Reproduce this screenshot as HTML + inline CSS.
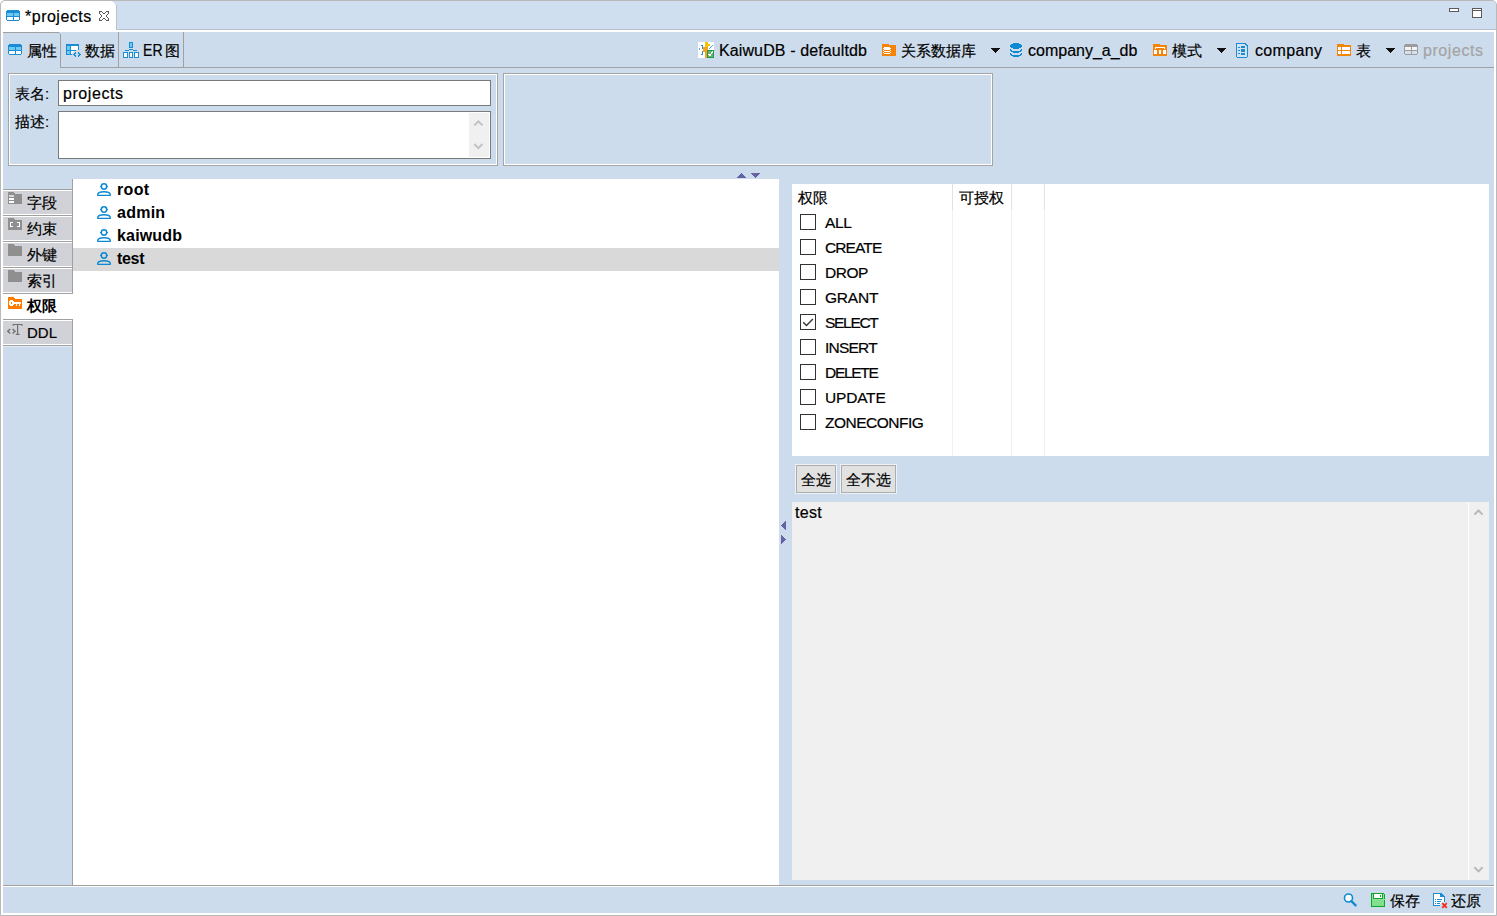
<!DOCTYPE html>
<html><head><meta charset="utf-8"><style>
html,body{margin:0;padding:0;width:1497px;height:916px;overflow:hidden;background:#fff}
body{position:relative;font-family:"Liberation Sans",sans-serif}
body>div{position:absolute}
</style></head><body>
<div style="left:0px;top:0px;width:1497px;height:916px;background:#ffffff;"></div>
<div style="left:0px;top:0px;width:1497px;height:916px;background:#cddcec;box-sizing:border-box;border:1px solid #b9b9b9;border-radius:5px 5px 0 0"></div>
<div style="left:1px;top:1px;width:1495px;height:29px;background:#d0dfef;border-radius:4px 4px 0 0"></div>
<div style="left:1px;top:29px;width:1495px;height:1px;background:#b9c3d0;"></div>
<div style="left:1px;top:30px;width:1495px;height:2px;background:#ffffff;"></div>
<div style="left:1px;top:32px;width:2px;height:883px;background:#ffffff;"></div>
<div style="left:1494px;top:32px;width:2px;height:883px;background:#ffffff;"></div>
<div style="left:1px;top:913px;width:1495px;height:2px;background:#ffffff;"></div>
<div style="left:1px;top:1px;width:115px;height:31px;background:#ffffff;border-radius:5px 6px 0 0"></div>
<div style="left:116px;top:5px;width:1px;height:25px;background:#b9c3d0;"></div>
<svg style="position:absolute;left:1448px;top:7px" width="13" height="7" viewBox="0 0 13 7" shape-rendering="crispEdges"><rect x="1.5" y="1.5" width="9" height="3" fill="#fff" stroke="#5a5a5a" stroke-width="1"/></svg>
<svg style="position:absolute;left:1471px;top:7px" width="13" height="12" viewBox="0 0 13 12" shape-rendering="crispEdges"><rect x="1.5" y="1.5" width="9" height="9" fill="#fff" stroke="#5a5a5a" stroke-width="1"/><line x1="1" y1="3.5" x2="11" y2="3.5" stroke="#5a5a5a"/></svg>
<div style="left:3px;top:32px;width:56px;height:1px;background:#a0a0a0;"></div>
<div style="left:59px;top:33px;width:1px;height:1px;background:#b5b5b5;"></div>
<div style="left:60px;top:34px;width:1px;height:34px;background:#a0a0a0;"></div>
<div style="left:60px;top:67px;width:1434px;height:1px;background:#a0a0a0;"></div>
<div style="left:118px;top:32px;width:1px;height:35px;background:#a0a0a0;"></div>
<div style="left:183px;top:32px;width:1px;height:35px;background:#a0a0a0;"></div>
<div style="left:8px;top:73px;width:490px;height:93px;background:transparent;box-sizing:border-box;border:1px solid #a5a5a5"></div>
<div style="left:9px;top:74px;width:488px;height:91px;background:transparent;box-sizing:border-box;border:1px solid #ffffff"></div>
<div style="left:503px;top:73px;width:490px;height:93px;background:transparent;box-sizing:border-box;border:1px solid #a5a5a5"></div>
<div style="left:504px;top:74px;width:488px;height:91px;background:transparent;box-sizing:border-box;border:1px solid #ffffff"></div>
<div style="left:58px;top:80px;width:433px;height:26px;background:#ffffff;box-sizing:border-box;border:1px solid #7a7a7a"></div>
<div style="left:58px;top:111px;width:433px;height:48px;background:#ffffff;box-sizing:border-box;border:1px solid #7a7a7a"></div>
<div style="left:469px;top:113px;width:20px;height:44px;background:#f0f0f0;"></div>
<svg style="position:absolute;left:469px;top:113px" width="20" height="44" viewBox="0 0 20 44"><polyline points="5.3,12.4 9.4,8.3 13.5,12.4" fill="none" stroke="#c2c2c2" stroke-width="2"/><polyline points="5.3,31 9.4,35.1 13.5,31" fill="none" stroke="#c2c2c2" stroke-width="2"/></svg>
<div style="left:72px;top:179px;width:1px;height:707px;background:#a0a0a0;"></div>
<div style="left:3px;top:189px;width:69px;height:1px;background:#a0a0a0;"></div>
<div style="left:3px;top:190px;width:69px;height:1px;background:#ffffff;"></div>
<div style="left:3px;top:191px;width:69px;height:23px;background:#d1d2d7;"></div>
<div style="left:3px;top:214px;width:69px;height:1px;background:#ffffff;"></div>
<div style="left:3px;top:215px;width:69px;height:1px;background:#a0a0a0;"></div>
<div style="left:3px;top:216px;width:69px;height:1px;background:#ffffff;"></div>
<div style="left:3px;top:217px;width:69px;height:23px;background:#d1d2d7;"></div>
<div style="left:3px;top:240px;width:69px;height:1px;background:#ffffff;"></div>
<div style="left:3px;top:241px;width:69px;height:1px;background:#a0a0a0;"></div>
<div style="left:3px;top:242px;width:69px;height:1px;background:#ffffff;"></div>
<div style="left:3px;top:243px;width:69px;height:23px;background:#d1d2d7;"></div>
<div style="left:3px;top:266px;width:69px;height:1px;background:#ffffff;"></div>
<div style="left:3px;top:267px;width:69px;height:1px;background:#a0a0a0;"></div>
<div style="left:3px;top:268px;width:69px;height:1px;background:#ffffff;"></div>
<div style="left:3px;top:269px;width:69px;height:23px;background:#d1d2d7;"></div>
<div style="left:3px;top:292px;width:69px;height:1px;background:#ffffff;"></div>
<div style="left:3px;top:294px;width:70px;height:25px;background:#ffffff;"></div>
<div style="left:3px;top:319px;width:69px;height:1px;background:#a0a0a0;"></div>
<div style="left:3px;top:320px;width:69px;height:1px;background:#ffffff;"></div>
<div style="left:3px;top:321px;width:69px;height:23px;background:#d1d2d7;"></div>
<div style="left:3px;top:344px;width:69px;height:1px;background:#ffffff;"></div>
<div style="left:3px;top:345px;width:69px;height:1px;background:#a0a0a0;"></div>
<div style="left:3px;top:346px;width:69px;height:1px;background:#e4eaf2;"></div>
<div style="left:3px;top:293px;width:69px;height:1px;background:#a0a0a0;"></div>
<div style="left:73px;top:179px;width:706px;height:706px;background:#ffffff;"></div>
<div style="left:73px;top:248px;width:706px;height:23px;background:#d9d9d9;"></div>
<div style="left:792px;top:184px;width:697px;height:272px;background:#ffffff;"></div>
<div style="left:952px;top:184px;width:1px;height:26px;background:#e2e2e2;"></div>
<div style="left:952px;top:210px;width:1px;height:246px;background:#eaf2fb;"></div>
<div style="left:1011px;top:184px;width:1px;height:26px;background:#e2e2e2;"></div>
<div style="left:1011px;top:210px;width:1px;height:246px;background:#eaf2fb;"></div>
<div style="left:1044px;top:184px;width:1px;height:26px;background:#e2e2e2;"></div>
<div style="left:1044px;top:210px;width:1px;height:246px;background:#eaf2fb;"></div>
<div style="left:800px;top:214px;width:16px;height:16px;background:#ffffff;box-sizing:border-box;border:1px solid #333333"></div>
<div style="left:800px;top:239px;width:16px;height:16px;background:#ffffff;box-sizing:border-box;border:1px solid #333333"></div>
<div style="left:800px;top:264px;width:16px;height:16px;background:#ffffff;box-sizing:border-box;border:1px solid #333333"></div>
<div style="left:800px;top:289px;width:16px;height:16px;background:#ffffff;box-sizing:border-box;border:1px solid #333333"></div>
<div style="left:800px;top:314px;width:16px;height:16px;background:#ffffff;box-sizing:border-box;border:1px solid #333333"></div>
<div style="left:800px;top:339px;width:16px;height:16px;background:#ffffff;box-sizing:border-box;border:1px solid #333333"></div>
<div style="left:800px;top:364px;width:16px;height:16px;background:#ffffff;box-sizing:border-box;border:1px solid #333333"></div>
<div style="left:800px;top:389px;width:16px;height:16px;background:#ffffff;box-sizing:border-box;border:1px solid #333333"></div>
<div style="left:800px;top:414px;width:16px;height:16px;background:#ffffff;box-sizing:border-box;border:1px solid #333333"></div>
<svg style="position:absolute;left:800px;top:314px" width="16" height="16" viewBox="0 0 16 16"><polyline points="3.2,8.2 6.5,11.5 12.9,5" fill="none" stroke="#333" stroke-width="1.35"/></svg>
<div style="left:795px;top:464px;width:42px;height:30px;background:#eef2f7;"></div>
<div style="left:796px;top:465px;width:40px;height:28px;background:#e1e1e1;box-sizing:border-box;border:1px solid #adadad"></div>
<div style="left:840px;top:464px;width:57px;height:30px;background:#eef2f7;"></div>
<div style="left:841px;top:465px;width:55px;height:28px;background:#e1e1e1;box-sizing:border-box;border:1px solid #adadad"></div>
<div style="left:792px;top:502px;width:697px;height:378px;background:#f0f0f0;"></div>
<div style="left:1468px;top:502px;width:1px;height:378px;background:#ffffff;"></div>
<svg style="position:absolute;left:1469px;top:502px" width="20" height="378" viewBox="0 0 20 378"><polyline points="5.4,12.6 9.5,8.5 13.6,12.6" fill="none" stroke="#b8b8b8" stroke-width="2"/><polyline points="5.4,365.3 9.5,369.4 13.6,365.3" fill="none" stroke="#b8b8b8" stroke-width="2"/></svg>
<div style="left:3px;top:885px;width:1491px;height:1px;background:#a0a0a0;"></div>
<div style="left:3px;top:886px;width:1491px;height:1px;background:#ffffff;"></div>
<svg style="position:absolute;left:737px;top:173px" width="9" height="5" viewBox="0 0 9 5" shape-rendering="crispEdges"><rect x="4" y="0" width="1" height="1" fill="#6464a3"/><rect x="3" y="1" width="3" height="1" fill="#6464a3"/><rect x="2" y="2" width="5" height="1" fill="#6464a3"/><rect x="1" y="3" width="7" height="1" fill="#6464a3"/><rect x="0" y="4" width="9" height="1" fill="#6464a3"/></svg>
<svg style="position:absolute;left:751px;top:173px" width="9" height="5" viewBox="0 0 9 5" shape-rendering="crispEdges"><rect x="0" y="0" width="9" height="1" fill="#6464a3"/><rect x="1" y="1" width="7" height="1" fill="#6464a3"/><rect x="2" y="2" width="5" height="1" fill="#6464a3"/><rect x="3" y="3" width="3" height="1" fill="#6464a3"/><rect x="4" y="4" width="1" height="1" fill="#6464a3"/></svg>
<svg style="position:absolute;left:781px;top:521px" width="5" height="9" viewBox="0 0 5 9" shape-rendering="crispEdges"><rect x="4" y="0" width="1" height="1" fill="#6464a3"/><rect x="3" y="1" width="2" height="1" fill="#6464a3"/><rect x="2" y="2" width="3" height="1" fill="#6464a3"/><rect x="1" y="3" width="4" height="1" fill="#6464a3"/><rect x="0" y="4" width="5" height="1" fill="#6464a3"/><rect x="1" y="5" width="4" height="1" fill="#6464a3"/><rect x="2" y="6" width="3" height="1" fill="#6464a3"/><rect x="3" y="7" width="2" height="1" fill="#6464a3"/><rect x="4" y="8" width="1" height="1" fill="#6464a3"/></svg>
<svg style="position:absolute;left:781px;top:535px" width="5" height="9" viewBox="0 0 5 9" shape-rendering="crispEdges"><rect x="0" y="0" width="1" height="1" fill="#6464a3"/><rect x="0" y="1" width="2" height="1" fill="#6464a3"/><rect x="0" y="2" width="3" height="1" fill="#6464a3"/><rect x="0" y="3" width="4" height="1" fill="#6464a3"/><rect x="0" y="4" width="5" height="1" fill="#6464a3"/><rect x="0" y="5" width="4" height="1" fill="#6464a3"/><rect x="0" y="6" width="3" height="1" fill="#6464a3"/><rect x="0" y="7" width="2" height="1" fill="#6464a3"/><rect x="0" y="8" width="1" height="1" fill="#6464a3"/></svg>
<svg style="position:absolute;left:6px;top:10px" width="14" height="11" viewBox="0 0 14 11" shape-rendering="crispEdges"><rect x="1" y="0" width="12" height="1" fill="#1a8dd5"/><rect x="0" y="1" width="14" height="1" fill="#1a8dd5"/><rect x="0" y="2" width="14" height="1" fill="#1a8dd5"/><rect x="0" y="3" width="1" height="1" fill="#1a8dd5"/><rect x="1" y="3" width="6" height="1" fill="#6dc9ee"/><rect x="7" y="3" width="1" height="1" fill="#1a8dd5"/><rect x="8" y="3" width="5" height="1" fill="#6dc9ee"/><rect x="13" y="3" width="1" height="1" fill="#1a8dd5"/><rect x="0" y="4" width="1" height="1" fill="#1a8dd5"/><rect x="1" y="4" width="6" height="1" fill="#6dc9ee"/><rect x="7" y="4" width="1" height="1" fill="#1a8dd5"/><rect x="8" y="4" width="5" height="1" fill="#6dc9ee"/><rect x="13" y="4" width="1" height="1" fill="#1a8dd5"/><rect x="0" y="5" width="1" height="1" fill="#1a8dd5"/><rect x="1" y="5" width="6" height="1" fill="#6dc9ee"/><rect x="7" y="5" width="1" height="1" fill="#1a8dd5"/><rect x="8" y="5" width="5" height="1" fill="#6dc9ee"/><rect x="13" y="5" width="1" height="1" fill="#1a8dd5"/><rect x="0" y="6" width="14" height="1" fill="#1a8dd5"/><rect x="0" y="7" width="1" height="1" fill="#1a8dd5"/><rect x="1" y="7" width="6" height="1" fill="#fff"/><rect x="7" y="7" width="1" height="1" fill="#1a8dd5"/><rect x="8" y="7" width="5" height="1" fill="#fff"/><rect x="13" y="7" width="1" height="1" fill="#1a8dd5"/><rect x="0" y="8" width="1" height="1" fill="#1a8dd5"/><rect x="1" y="8" width="6" height="1" fill="#fff"/><rect x="7" y="8" width="1" height="1" fill="#1a8dd5"/><rect x="8" y="8" width="5" height="1" fill="#fff"/><rect x="13" y="8" width="1" height="1" fill="#1a8dd5"/><rect x="0" y="9" width="1" height="1" fill="#1a8dd5"/><rect x="1" y="9" width="6" height="1" fill="#fff"/><rect x="7" y="9" width="1" height="1" fill="#1a8dd5"/><rect x="8" y="9" width="5" height="1" fill="#fff"/><rect x="13" y="9" width="1" height="1" fill="#1a8dd5"/><rect x="1" y="10" width="12" height="1" fill="#1a8dd5"/></svg>
<svg style="position:absolute;left:8px;top:44px" width="14" height="11" viewBox="0 0 14 11" shape-rendering="crispEdges"><rect x="1" y="0" width="12" height="1" fill="#1a8dd5"/><rect x="0" y="1" width="14" height="1" fill="#1a8dd5"/><rect x="0" y="2" width="14" height="1" fill="#1a8dd5"/><rect x="0" y="3" width="1" height="1" fill="#1a8dd5"/><rect x="1" y="3" width="6" height="1" fill="#6dc9ee"/><rect x="7" y="3" width="1" height="1" fill="#1a8dd5"/><rect x="8" y="3" width="5" height="1" fill="#6dc9ee"/><rect x="13" y="3" width="1" height="1" fill="#1a8dd5"/><rect x="0" y="4" width="1" height="1" fill="#1a8dd5"/><rect x="1" y="4" width="6" height="1" fill="#6dc9ee"/><rect x="7" y="4" width="1" height="1" fill="#1a8dd5"/><rect x="8" y="4" width="5" height="1" fill="#6dc9ee"/><rect x="13" y="4" width="1" height="1" fill="#1a8dd5"/><rect x="0" y="5" width="1" height="1" fill="#1a8dd5"/><rect x="1" y="5" width="6" height="1" fill="#6dc9ee"/><rect x="7" y="5" width="1" height="1" fill="#1a8dd5"/><rect x="8" y="5" width="5" height="1" fill="#6dc9ee"/><rect x="13" y="5" width="1" height="1" fill="#1a8dd5"/><rect x="0" y="6" width="14" height="1" fill="#1a8dd5"/><rect x="0" y="7" width="1" height="1" fill="#1a8dd5"/><rect x="1" y="7" width="6" height="1" fill="#fff"/><rect x="7" y="7" width="1" height="1" fill="#1a8dd5"/><rect x="8" y="7" width="5" height="1" fill="#fff"/><rect x="13" y="7" width="1" height="1" fill="#1a8dd5"/><rect x="0" y="8" width="1" height="1" fill="#1a8dd5"/><rect x="1" y="8" width="6" height="1" fill="#fff"/><rect x="7" y="8" width="1" height="1" fill="#1a8dd5"/><rect x="8" y="8" width="5" height="1" fill="#fff"/><rect x="13" y="8" width="1" height="1" fill="#1a8dd5"/><rect x="0" y="9" width="1" height="1" fill="#1a8dd5"/><rect x="1" y="9" width="6" height="1" fill="#fff"/><rect x="7" y="9" width="1" height="1" fill="#1a8dd5"/><rect x="8" y="9" width="5" height="1" fill="#fff"/><rect x="13" y="9" width="1" height="1" fill="#1a8dd5"/><rect x="1" y="10" width="12" height="1" fill="#1a8dd5"/></svg>
<svg style="position:absolute;left:1404px;top:44px" width="14" height="11" viewBox="0 0 14 11" shape-rendering="crispEdges"><rect x="1" y="0" width="12" height="1" fill="#9c9c9c"/><rect x="0" y="1" width="14" height="1" fill="#9c9c9c"/><rect x="0" y="2" width="14" height="1" fill="#9c9c9c"/><rect x="0" y="3" width="1" height="1" fill="#9c9c9c"/><rect x="1" y="3" width="6" height="1" fill="#f4f4f4"/><rect x="7" y="3" width="1" height="1" fill="#9c9c9c"/><rect x="8" y="3" width="5" height="1" fill="#f4f4f4"/><rect x="13" y="3" width="1" height="1" fill="#9c9c9c"/><rect x="0" y="4" width="1" height="1" fill="#9c9c9c"/><rect x="1" y="4" width="6" height="1" fill="#f4f4f4"/><rect x="7" y="4" width="1" height="1" fill="#9c9c9c"/><rect x="8" y="4" width="5" height="1" fill="#f4f4f4"/><rect x="13" y="4" width="1" height="1" fill="#9c9c9c"/><rect x="0" y="5" width="1" height="1" fill="#9c9c9c"/><rect x="1" y="5" width="6" height="1" fill="#f4f4f4"/><rect x="7" y="5" width="1" height="1" fill="#9c9c9c"/><rect x="8" y="5" width="5" height="1" fill="#f4f4f4"/><rect x="13" y="5" width="1" height="1" fill="#9c9c9c"/><rect x="0" y="6" width="14" height="1" fill="#9c9c9c"/><rect x="0" y="7" width="1" height="1" fill="#9c9c9c"/><rect x="1" y="7" width="6" height="1" fill="#d4e1ef"/><rect x="7" y="7" width="1" height="1" fill="#9c9c9c"/><rect x="8" y="7" width="5" height="1" fill="#d4e1ef"/><rect x="13" y="7" width="1" height="1" fill="#9c9c9c"/><rect x="0" y="8" width="1" height="1" fill="#9c9c9c"/><rect x="1" y="8" width="6" height="1" fill="#d4e1ef"/><rect x="7" y="8" width="1" height="1" fill="#9c9c9c"/><rect x="8" y="8" width="5" height="1" fill="#d4e1ef"/><rect x="13" y="8" width="1" height="1" fill="#9c9c9c"/><rect x="0" y="9" width="1" height="1" fill="#9c9c9c"/><rect x="1" y="9" width="6" height="1" fill="#d4e1ef"/><rect x="7" y="9" width="1" height="1" fill="#9c9c9c"/><rect x="8" y="9" width="5" height="1" fill="#d4e1ef"/><rect x="13" y="9" width="1" height="1" fill="#9c9c9c"/><rect x="1" y="10" width="12" height="1" fill="#9c9c9c"/></svg>
<svg style="position:absolute;left:99px;top:11px" width="10" height="10" viewBox="0 0 10 10" shape-rendering="crispEdges"><rect x="0" y="0" width="3" height="1" fill="#5c5c5c"/><rect x="7" y="0" width="3" height="1" fill="#5c5c5c"/><rect x="0" y="1" width="1" height="1" fill="#5c5c5c"/><rect x="3" y="1" width="1" height="1" fill="#5c5c5c"/><rect x="6" y="1" width="1" height="1" fill="#5c5c5c"/><rect x="9" y="1" width="1" height="1" fill="#5c5c5c"/><rect x="0" y="2" width="1" height="1" fill="#5c5c5c"/><rect x="4" y="2" width="2" height="1" fill="#5c5c5c"/><rect x="9" y="2" width="1" height="1" fill="#5c5c5c"/><rect x="1" y="3" width="1" height="1" fill="#5c5c5c"/><rect x="8" y="3" width="1" height="1" fill="#5c5c5c"/><rect x="2" y="4" width="1" height="1" fill="#5c5c5c"/><rect x="7" y="4" width="1" height="1" fill="#5c5c5c"/><rect x="2" y="5" width="1" height="1" fill="#5c5c5c"/><rect x="7" y="5" width="1" height="1" fill="#5c5c5c"/><rect x="1" y="6" width="1" height="1" fill="#5c5c5c"/><rect x="8" y="6" width="1" height="1" fill="#5c5c5c"/><rect x="0" y="7" width="1" height="1" fill="#5c5c5c"/><rect x="4" y="7" width="2" height="1" fill="#5c5c5c"/><rect x="9" y="7" width="1" height="1" fill="#5c5c5c"/><rect x="0" y="8" width="1" height="1" fill="#5c5c5c"/><rect x="3" y="8" width="1" height="1" fill="#5c5c5c"/><rect x="6" y="8" width="1" height="1" fill="#5c5c5c"/><rect x="9" y="8" width="1" height="1" fill="#5c5c5c"/><rect x="0" y="9" width="3" height="1" fill="#5c5c5c"/><rect x="7" y="9" width="3" height="1" fill="#5c5c5c"/></svg>
<svg style="position:absolute;left:66px;top:44px" width="15" height="13" viewBox="0 0 15 13" shape-rendering="crispEdges"><rect x="0" y="0" width="13" height="1" fill="#1a8dd5"/><rect x="0" y="1" width="13" height="1" fill="#1a8dd5"/><rect x="0" y="2" width="1" height="1" fill="#1a8dd5"/><rect x="1" y="2" width="3" height="1" fill="#6dc9ee"/><rect x="4" y="2" width="1" height="1" fill="#1a8dd5"/><rect x="5" y="2" width="7" height="1" fill="#fff"/><rect x="12" y="2" width="1" height="1" fill="#1a8dd5"/><rect x="0" y="3" width="1" height="1" fill="#1a8dd5"/><rect x="1" y="3" width="3" height="1" fill="#6dc9ee"/><rect x="4" y="3" width="1" height="1" fill="#1a8dd5"/><rect x="5" y="3" width="7" height="1" fill="#fff"/><rect x="12" y="3" width="1" height="1" fill="#1a8dd5"/><rect x="0" y="4" width="1" height="1" fill="#1a8dd5"/><rect x="1" y="4" width="3" height="1" fill="#6dc9ee"/><rect x="4" y="4" width="1" height="1" fill="#1a8dd5"/><rect x="5" y="4" width="7" height="1" fill="#fff"/><rect x="12" y="4" width="1" height="1" fill="#1a8dd5"/><rect x="0" y="5" width="1" height="1" fill="#1a8dd5"/><rect x="1" y="5" width="3" height="1" fill="#6dc9ee"/><rect x="4" y="5" width="1" height="1" fill="#1a8dd5"/><rect x="5" y="5" width="7" height="1" fill="#fff"/><rect x="12" y="5" width="1" height="1" fill="#1a8dd5"/><rect x="0" y="6" width="10" height="1" fill="#1a8dd5"/><rect x="0" y="7" width="1" height="1" fill="#1a8dd5"/><rect x="1" y="7" width="3" height="1" fill="#6dc9ee"/><rect x="4" y="7" width="1" height="1" fill="#1a8dd5"/><rect x="5" y="7" width="3" height="1" fill="#fff"/><rect x="0" y="8" width="1" height="1" fill="#1a8dd5"/><rect x="1" y="8" width="3" height="1" fill="#6dc9ee"/><rect x="4" y="8" width="1" height="1" fill="#1a8dd5"/><rect x="5" y="8" width="2" height="1" fill="#fff"/><rect x="9" y="8" width="1" height="1" fill="#1a8dd5"/><rect x="12" y="8" width="1" height="1" fill="#1a8dd5"/><rect x="0" y="9" width="1" height="1" fill="#1a8dd5"/><rect x="1" y="9" width="3" height="1" fill="#6dc9ee"/><rect x="4" y="9" width="1" height="1" fill="#1a8dd5"/><rect x="5" y="9" width="1" height="1" fill="#fff"/><rect x="8" y="9" width="2" height="1" fill="#1a8dd5"/><rect x="12" y="9" width="2" height="1" fill="#1a8dd5"/><rect x="0" y="10" width="6" height="1" fill="#1a8dd5"/><rect x="7" y="10" width="2" height="1" fill="#1a8dd5"/><rect x="13" y="10" width="2" height="1" fill="#1a8dd5"/><rect x="8" y="11" width="2" height="1" fill="#1a8dd5"/><rect x="12" y="11" width="2" height="1" fill="#1a8dd5"/><rect x="9" y="12" width="1" height="1" fill="#1a8dd5"/><rect x="12" y="12" width="1" height="1" fill="#1a8dd5"/></svg>
<svg style="position:absolute;left:123px;top:42px" width="16" height="16" viewBox="0 0 16 16" shape-rendering="crispEdges"><rect x="6" y="0" width="4" height="1" fill="#1a8dd5"/><rect x="6" y="1" width="1" height="1" fill="#1a8dd5"/><rect x="7" y="1" width="2" height="1" fill="#6dc9ee"/><rect x="9" y="1" width="1" height="1" fill="#1a8dd5"/><rect x="6" y="2" width="1" height="1" fill="#1a8dd5"/><rect x="7" y="2" width="2" height="1" fill="#6dc9ee"/><rect x="9" y="2" width="1" height="1" fill="#1a8dd5"/><rect x="6" y="3" width="1" height="1" fill="#1a8dd5"/><rect x="7" y="3" width="2" height="1" fill="#6dc9ee"/><rect x="9" y="3" width="1" height="1" fill="#1a8dd5"/><rect x="6" y="4" width="1" height="1" fill="#1a8dd5"/><rect x="7" y="4" width="2" height="1" fill="#6dc9ee"/><rect x="9" y="4" width="1" height="1" fill="#1a8dd5"/><rect x="6" y="5" width="4" height="1" fill="#1a8dd5"/><rect x="6" y="7" width="4" height="1" fill="#1a8dd5"/><rect x="2" y="8" width="4" height="1" fill="#1a8dd5"/><rect x="10" y="8" width="4" height="1" fill="#1a8dd5"/><rect x="0" y="10" width="5" height="1" fill="#1a8dd5"/><rect x="6" y="10" width="4" height="1" fill="#1a8dd5"/><rect x="11" y="10" width="5" height="1" fill="#1a8dd5"/><rect x="0" y="11" width="1" height="1" fill="#1a8dd5"/><rect x="1" y="11" width="3" height="1" fill="#fff"/><rect x="4" y="11" width="1" height="1" fill="#1a8dd5"/><rect x="6" y="11" width="1" height="1" fill="#1a8dd5"/><rect x="7" y="11" width="2" height="1" fill="#fff"/><rect x="9" y="11" width="1" height="1" fill="#1a8dd5"/><rect x="11" y="11" width="1" height="1" fill="#1a8dd5"/><rect x="12" y="11" width="3" height="1" fill="#fff"/><rect x="15" y="11" width="1" height="1" fill="#1a8dd5"/><rect x="0" y="12" width="1" height="1" fill="#1a8dd5"/><rect x="1" y="12" width="3" height="1" fill="#fff"/><rect x="4" y="12" width="1" height="1" fill="#1a8dd5"/><rect x="6" y="12" width="1" height="1" fill="#1a8dd5"/><rect x="7" y="12" width="2" height="1" fill="#fff"/><rect x="9" y="12" width="1" height="1" fill="#1a8dd5"/><rect x="11" y="12" width="1" height="1" fill="#1a8dd5"/><rect x="12" y="12" width="3" height="1" fill="#fff"/><rect x="15" y="12" width="1" height="1" fill="#1a8dd5"/><rect x="0" y="13" width="1" height="1" fill="#1a8dd5"/><rect x="1" y="13" width="3" height="1" fill="#fff"/><rect x="4" y="13" width="1" height="1" fill="#1a8dd5"/><rect x="6" y="13" width="1" height="1" fill="#1a8dd5"/><rect x="7" y="13" width="2" height="1" fill="#fff"/><rect x="9" y="13" width="1" height="1" fill="#1a8dd5"/><rect x="11" y="13" width="1" height="1" fill="#1a8dd5"/><rect x="12" y="13" width="3" height="1" fill="#fff"/><rect x="15" y="13" width="1" height="1" fill="#1a8dd5"/><rect x="0" y="14" width="1" height="1" fill="#1a8dd5"/><rect x="1" y="14" width="3" height="1" fill="#fff"/><rect x="4" y="14" width="1" height="1" fill="#1a8dd5"/><rect x="6" y="14" width="1" height="1" fill="#1a8dd5"/><rect x="7" y="14" width="2" height="1" fill="#fff"/><rect x="9" y="14" width="1" height="1" fill="#1a8dd5"/><rect x="11" y="14" width="1" height="1" fill="#1a8dd5"/><rect x="12" y="14" width="3" height="1" fill="#fff"/><rect x="15" y="14" width="1" height="1" fill="#1a8dd5"/><rect x="0" y="15" width="5" height="1" fill="#1a8dd5"/><rect x="6" y="15" width="4" height="1" fill="#1a8dd5"/><rect x="11" y="15" width="5" height="1" fill="#1a8dd5"/></svg>
<svg style="position:absolute;left:698px;top:42px" width="16" height="16" viewBox="0 0 16 16" shape-rendering="crispEdges"><rect x="0" y="0" width="16" height="16" fill="#fff"/><path d="M3,3 H4 V6 H5 V9 H4 V12 H3" stroke="#2b95d6" fill="none" stroke-width="1"/><rect x="1" y="6" width="1" height="2" fill="#56b4e9"/><rect x="7" y="0" width="3" height="16" fill="#f7a21b"/><rect x="7" y="0" width="3" height="5" fill="#f6c700"/><rect x="5" y="5" width="2" height="5" fill="#f7a21b"/><rect x="10" y="2" width="2" height="2" fill="#f6c700"/><path d="M11,7 L15,3" stroke="#44a8e8" stroke-width="1.2"/><rect x="9" y="8" width="7" height="8" fill="#1c9c45"/><rect x="10" y="9" width="5" height="6" fill="#63b27a"/><path d="M10.5,12 L12,13.8 L14.5,9.5" stroke="#fff" stroke-width="1.3" fill="none"/></svg>
<svg style="position:absolute;left:882px;top:44px" width="14" height="12" viewBox="0 0 14 12" shape-rendering="crispEdges"><rect x="0" y="0" width="7" height="1" fill="#f5850a"/><rect x="0" y="1" width="14" height="1" fill="#f5850a"/><rect x="0" y="2" width="14" height="1" fill="#f5850a"/><rect x="0" y="3" width="2" height="1" fill="#f5850a"/><rect x="2" y="3" width="6" height="1" fill="#fff"/><rect x="8" y="3" width="6" height="1" fill="#f5850a"/><rect x="0" y="4" width="1" height="1" fill="#f5850a"/><rect x="1" y="4" width="8" height="1" fill="#fff"/><rect x="9" y="4" width="5" height="1" fill="#f5850a"/><rect x="0" y="5" width="2" height="1" fill="#f5850a"/><rect x="2" y="5" width="6" height="1" fill="#fff"/><rect x="8" y="5" width="6" height="1" fill="#f5850a"/><rect x="0" y="6" width="1" height="1" fill="#f5850a"/><rect x="1" y="6" width="1" height="1" fill="#fff"/><rect x="2" y="6" width="6" height="1" fill="#f5850a"/><rect x="8" y="6" width="1" height="1" fill="#fff"/><rect x="9" y="6" width="5" height="1" fill="#f5850a"/><rect x="0" y="7" width="2" height="1" fill="#f5850a"/><rect x="2" y="7" width="6" height="1" fill="#fff"/><rect x="8" y="7" width="6" height="1" fill="#f5850a"/><rect x="0" y="8" width="1" height="1" fill="#f5850a"/><rect x="1" y="8" width="1" height="1" fill="#fff"/><rect x="2" y="8" width="6" height="1" fill="#f5850a"/><rect x="8" y="8" width="1" height="1" fill="#fff"/><rect x="9" y="8" width="5" height="1" fill="#f5850a"/><rect x="0" y="9" width="2" height="1" fill="#f5850a"/><rect x="2" y="9" width="6" height="1" fill="#fff"/><rect x="8" y="9" width="6" height="1" fill="#f5850a"/><rect x="0" y="10" width="14" height="1" fill="#f5850a"/><rect x="0" y="11" width="14" height="1" fill="#f5850a"/></svg>
<svg style="position:absolute;left:991px;top:48px" width="9" height="5" viewBox="0 0 9 5" shape-rendering="crispEdges"><rect x="0" y="0" width="9" height="1" fill="#111"/><rect x="1" y="1" width="7" height="1" fill="#111"/><rect x="2" y="2" width="5" height="1" fill="#111"/><rect x="3" y="3" width="3" height="1" fill="#111"/><rect x="4" y="4" width="1" height="1" fill="#111"/></svg>
<svg style="position:absolute;left:1217px;top:48px" width="9" height="5" viewBox="0 0 9 5" shape-rendering="crispEdges"><rect x="0" y="0" width="9" height="1" fill="#111"/><rect x="1" y="1" width="7" height="1" fill="#111"/><rect x="2" y="2" width="5" height="1" fill="#111"/><rect x="3" y="3" width="3" height="1" fill="#111"/><rect x="4" y="4" width="1" height="1" fill="#111"/></svg>
<svg style="position:absolute;left:1386px;top:48px" width="9" height="5" viewBox="0 0 9 5" shape-rendering="crispEdges"><rect x="0" y="0" width="9" height="1" fill="#111"/><rect x="1" y="1" width="7" height="1" fill="#111"/><rect x="2" y="2" width="5" height="1" fill="#111"/><rect x="3" y="3" width="3" height="1" fill="#111"/><rect x="4" y="4" width="1" height="1" fill="#111"/></svg>
<svg style="position:absolute;left:1010px;top:43px" width="12" height="14" viewBox="0 0 12 14" shape-rendering="crispEdges"><rect x="3" y="0" width="6" height="1" fill="#0f8bd6"/><rect x="1" y="1" width="10" height="1" fill="#0f8bd6"/><rect x="0" y="2" width="12" height="1" fill="#0f8bd6"/><rect x="0" y="3" width="12" height="1" fill="#0f8bd6"/><rect x="1" y="4" width="10" height="1" fill="#0f8bd6"/><rect x="3" y="5" width="6" height="1" fill="#0f8bd6"/><rect x="0" y="6" width="1" height="1" fill="#0f8bd6"/><rect x="11" y="6" width="1" height="1" fill="#0f8bd6"/><rect x="0" y="7" width="2" height="1" fill="#0f8bd6"/><rect x="10" y="7" width="2" height="1" fill="#0f8bd6"/><rect x="1" y="8" width="10" height="1" fill="#0f8bd6"/><rect x="3" y="9" width="6" height="1" fill="#0f8bd6"/><rect x="0" y="10" width="1" height="1" fill="#0f8bd6"/><rect x="11" y="10" width="1" height="1" fill="#0f8bd6"/><rect x="0" y="11" width="2" height="1" fill="#0f8bd6"/><rect x="10" y="11" width="2" height="1" fill="#0f8bd6"/><rect x="1" y="12" width="10" height="1" fill="#0f8bd6"/><rect x="3" y="13" width="6" height="1" fill="#0f8bd6"/></svg>
<svg style="position:absolute;left:1153px;top:44px" width="14" height="12" viewBox="0 0 14 12" shape-rendering="crispEdges"><rect x="0" y="0" width="7" height="1" fill="#f5850a"/><rect x="0" y="1" width="14" height="1" fill="#f5850a"/><rect x="0" y="2" width="14" height="1" fill="#f5850a"/><rect x="0" y="3" width="2" height="1" fill="#f5850a"/><rect x="2" y="3" width="10" height="1" fill="#fff"/><rect x="12" y="3" width="2" height="1" fill="#f5850a"/><rect x="0" y="4" width="2" height="1" fill="#f5850a"/><rect x="2" y="4" width="1" height="1" fill="#fff"/><rect x="3" y="4" width="8" height="1" fill="#f5850a"/><rect x="11" y="4" width="1" height="1" fill="#fff"/><rect x="12" y="4" width="2" height="1" fill="#f5850a"/><rect x="0" y="5" width="14" height="1" fill="#f5850a"/><rect x="0" y="6" width="1" height="1" fill="#f5850a"/><rect x="1" y="6" width="3" height="1" fill="#fff"/><rect x="4" y="6" width="2" height="1" fill="#f5850a"/><rect x="6" y="6" width="2" height="1" fill="#fff"/><rect x="8" y="6" width="2" height="1" fill="#f5850a"/><rect x="10" y="6" width="3" height="1" fill="#fff"/><rect x="13" y="6" width="1" height="1" fill="#f5850a"/><rect x="0" y="7" width="1" height="1" fill="#f5850a"/><rect x="1" y="7" width="3" height="1" fill="#fff"/><rect x="4" y="7" width="2" height="1" fill="#f5850a"/><rect x="6" y="7" width="2" height="1" fill="#fff"/><rect x="8" y="7" width="2" height="1" fill="#f5850a"/><rect x="10" y="7" width="3" height="1" fill="#fff"/><rect x="13" y="7" width="1" height="1" fill="#f5850a"/><rect x="0" y="8" width="1" height="1" fill="#f5850a"/><rect x="1" y="8" width="3" height="1" fill="#fff"/><rect x="4" y="8" width="2" height="1" fill="#f5850a"/><rect x="6" y="8" width="2" height="1" fill="#fff"/><rect x="8" y="8" width="2" height="1" fill="#f5850a"/><rect x="10" y="8" width="3" height="1" fill="#fff"/><rect x="13" y="8" width="1" height="1" fill="#f5850a"/><rect x="0" y="9" width="1" height="1" fill="#f5850a"/><rect x="1" y="9" width="3" height="1" fill="#fff"/><rect x="4" y="9" width="2" height="1" fill="#f5850a"/><rect x="6" y="9" width="2" height="1" fill="#fff"/><rect x="8" y="9" width="2" height="1" fill="#f5850a"/><rect x="10" y="9" width="3" height="1" fill="#fff"/><rect x="13" y="9" width="1" height="1" fill="#f5850a"/><rect x="0" y="10" width="14" height="1" fill="#f5850a"/><rect x="0" y="11" width="14" height="1" fill="#f5850a"/></svg>
<svg style="position:absolute;left:1236px;top:43px" width="12" height="15" viewBox="0 0 12 15" shape-rendering="crispEdges"><rect x="0" y="0" width="10" height="1" fill="#1a8dd5"/><rect x="0" y="1" width="1" height="1" fill="#1a8dd5"/><rect x="1" y="1" width="8" height="1" fill="#d6e2ef"/><rect x="9" y="1" width="2" height="1" fill="#1a8dd5"/><rect x="0" y="2" width="1" height="1" fill="#1a8dd5"/><rect x="1" y="2" width="9" height="1" fill="#d6e2ef"/><rect x="10" y="2" width="2" height="1" fill="#1a8dd5"/><rect x="0" y="3" width="1" height="1" fill="#1a8dd5"/><rect x="1" y="3" width="4" height="1" fill="#d6e2ef"/><rect x="5" y="3" width="4" height="1" fill="#1a8dd5"/><rect x="9" y="3" width="2" height="1" fill="#d6e2ef"/><rect x="11" y="3" width="1" height="1" fill="#1a8dd5"/><rect x="0" y="4" width="1" height="1" fill="#1a8dd5"/><rect x="1" y="4" width="1" height="1" fill="#d6e2ef"/><rect x="2" y="4" width="2" height="1" fill="#1a8dd5"/><rect x="4" y="4" width="1" height="1" fill="#d6e2ef"/><rect x="5" y="4" width="4" height="1" fill="#1a8dd5"/><rect x="9" y="4" width="2" height="1" fill="#d6e2ef"/><rect x="11" y="4" width="1" height="1" fill="#1a8dd5"/><rect x="0" y="5" width="1" height="1" fill="#1a8dd5"/><rect x="1" y="5" width="10" height="1" fill="#d6e2ef"/><rect x="11" y="5" width="1" height="1" fill="#1a8dd5"/><rect x="0" y="6" width="1" height="1" fill="#1a8dd5"/><rect x="1" y="6" width="4" height="1" fill="#d6e2ef"/><rect x="5" y="6" width="4" height="1" fill="#1a8dd5"/><rect x="9" y="6" width="2" height="1" fill="#d6e2ef"/><rect x="11" y="6" width="1" height="1" fill="#1a8dd5"/><rect x="0" y="7" width="1" height="1" fill="#1a8dd5"/><rect x="1" y="7" width="1" height="1" fill="#d6e2ef"/><rect x="2" y="7" width="2" height="1" fill="#1a8dd5"/><rect x="4" y="7" width="1" height="1" fill="#d6e2ef"/><rect x="5" y="7" width="4" height="1" fill="#1a8dd5"/><rect x="9" y="7" width="2" height="1" fill="#d6e2ef"/><rect x="11" y="7" width="1" height="1" fill="#1a8dd5"/><rect x="0" y="8" width="1" height="1" fill="#1a8dd5"/><rect x="1" y="8" width="4" height="1" fill="#d6e2ef"/><rect x="5" y="8" width="4" height="1" fill="#1a8dd5"/><rect x="9" y="8" width="2" height="1" fill="#d6e2ef"/><rect x="11" y="8" width="1" height="1" fill="#1a8dd5"/><rect x="0" y="9" width="1" height="1" fill="#1a8dd5"/><rect x="1" y="9" width="10" height="1" fill="#d6e2ef"/><rect x="11" y="9" width="1" height="1" fill="#1a8dd5"/><rect x="0" y="10" width="1" height="1" fill="#1a8dd5"/><rect x="1" y="10" width="1" height="1" fill="#d6e2ef"/><rect x="2" y="10" width="2" height="1" fill="#1a8dd5"/><rect x="4" y="10" width="1" height="1" fill="#d6e2ef"/><rect x="5" y="10" width="4" height="1" fill="#1a8dd5"/><rect x="9" y="10" width="2" height="1" fill="#d6e2ef"/><rect x="11" y="10" width="1" height="1" fill="#1a8dd5"/><rect x="0" y="11" width="1" height="1" fill="#1a8dd5"/><rect x="1" y="11" width="4" height="1" fill="#d6e2ef"/><rect x="5" y="11" width="4" height="1" fill="#1a8dd5"/><rect x="9" y="11" width="2" height="1" fill="#d6e2ef"/><rect x="11" y="11" width="1" height="1" fill="#1a8dd5"/><rect x="0" y="12" width="1" height="1" fill="#1a8dd5"/><rect x="1" y="12" width="10" height="1" fill="#d6e2ef"/><rect x="11" y="12" width="1" height="1" fill="#1a8dd5"/><rect x="0" y="13" width="1" height="1" fill="#1a8dd5"/><rect x="1" y="13" width="10" height="1" fill="#d6e2ef"/><rect x="11" y="13" width="1" height="1" fill="#1a8dd5"/><rect x="1" y="14" width="10" height="1" fill="#1a8dd5"/></svg>
<svg style="position:absolute;left:1337px;top:44px" width="14" height="12" viewBox="0 0 14 12" shape-rendering="crispEdges"><rect x="0" y="0" width="7" height="1" fill="#f5850a"/><rect x="0" y="1" width="14" height="1" fill="#f5850a"/><rect x="0" y="2" width="14" height="1" fill="#f5850a"/><rect x="0" y="3" width="1" height="1" fill="#f5850a"/><rect x="1" y="3" width="3" height="1" fill="#fff"/><rect x="4" y="3" width="1" height="1" fill="#f5850a"/><rect x="5" y="3" width="8" height="1" fill="#fff"/><rect x="13" y="3" width="1" height="1" fill="#f5850a"/><rect x="0" y="4" width="1" height="1" fill="#f5850a"/><rect x="1" y="4" width="3" height="1" fill="#fff"/><rect x="4" y="4" width="1" height="1" fill="#f5850a"/><rect x="5" y="4" width="8" height="1" fill="#fff"/><rect x="13" y="4" width="1" height="1" fill="#f5850a"/><rect x="0" y="5" width="1" height="1" fill="#f5850a"/><rect x="1" y="5" width="3" height="1" fill="#fff"/><rect x="4" y="5" width="1" height="1" fill="#f5850a"/><rect x="5" y="5" width="8" height="1" fill="#fff"/><rect x="13" y="5" width="1" height="1" fill="#f5850a"/><rect x="0" y="6" width="14" height="1" fill="#f5850a"/><rect x="0" y="7" width="1" height="1" fill="#f5850a"/><rect x="1" y="7" width="3" height="1" fill="#fff"/><rect x="4" y="7" width="1" height="1" fill="#f5850a"/><rect x="5" y="7" width="8" height="1" fill="#fff"/><rect x="13" y="7" width="1" height="1" fill="#f5850a"/><rect x="0" y="8" width="1" height="1" fill="#f5850a"/><rect x="1" y="8" width="3" height="1" fill="#fff"/><rect x="4" y="8" width="1" height="1" fill="#f5850a"/><rect x="5" y="8" width="8" height="1" fill="#fff"/><rect x="13" y="8" width="1" height="1" fill="#f5850a"/><rect x="0" y="9" width="1" height="1" fill="#f5850a"/><rect x="1" y="9" width="3" height="1" fill="#fff"/><rect x="4" y="9" width="1" height="1" fill="#f5850a"/><rect x="5" y="9" width="8" height="1" fill="#fff"/><rect x="13" y="9" width="1" height="1" fill="#f5850a"/><rect x="0" y="10" width="14" height="1" fill="#f5850a"/><rect x="0" y="11" width="14" height="1" fill="#f5850a"/></svg>
<svg style="position:absolute;left:8px;top:192px" width="14" height="12" viewBox="0 0 14 12" shape-rendering="crispEdges"><rect x="0" y="0" width="6" height="1" fill="#8f8f8f"/><rect x="0" y="1" width="7" height="1" fill="#8f8f8f"/><rect x="0" y="2" width="14" height="1" fill="#8f8f8f"/><rect x="0" y="3" width="1" height="1" fill="#8f8f8f"/><rect x="1" y="3" width="5" height="1" fill="#d8d8d8"/><rect x="6" y="3" width="8" height="1" fill="#8f8f8f"/><rect x="0" y="4" width="1" height="1" fill="#8f8f8f"/><rect x="1" y="4" width="5" height="1" fill="#d8d8d8"/><rect x="6" y="4" width="8" height="1" fill="#8f8f8f"/><rect x="0" y="5" width="14" height="1" fill="#8f8f8f"/><rect x="0" y="6" width="1" height="1" fill="#8f8f8f"/><rect x="1" y="6" width="5" height="1" fill="#fff"/><rect x="6" y="6" width="8" height="1" fill="#8f8f8f"/><rect x="0" y="7" width="1" height="1" fill="#8f8f8f"/><rect x="1" y="7" width="5" height="1" fill="#fff"/><rect x="6" y="7" width="8" height="1" fill="#8f8f8f"/><rect x="0" y="8" width="14" height="1" fill="#8f8f8f"/><rect x="0" y="9" width="1" height="1" fill="#8f8f8f"/><rect x="1" y="9" width="5" height="1" fill="#fff"/><rect x="6" y="9" width="8" height="1" fill="#8f8f8f"/><rect x="0" y="10" width="1" height="1" fill="#8f8f8f"/><rect x="1" y="10" width="5" height="1" fill="#fff"/><rect x="6" y="10" width="8" height="1" fill="#8f8f8f"/><rect x="0" y="11" width="14" height="1" fill="#8f8f8f"/></svg>
<svg style="position:absolute;left:8px;top:218px" width="14" height="12" viewBox="0 0 14 12" shape-rendering="crispEdges"><rect x="0" y="0" width="6" height="1" fill="#8f8f8f"/><rect x="0" y="1" width="7" height="1" fill="#8f8f8f"/><rect x="0" y="2" width="14" height="1" fill="#8f8f8f"/><rect x="0" y="3" width="14" height="1" fill="#8f8f8f"/><rect x="0" y="4" width="2" height="1" fill="#8f8f8f"/><rect x="2" y="4" width="3" height="1" fill="#fff"/><rect x="5" y="4" width="4" height="1" fill="#8f8f8f"/><rect x="9" y="4" width="3" height="1" fill="#fff"/><rect x="12" y="4" width="2" height="1" fill="#8f8f8f"/><rect x="0" y="5" width="2" height="1" fill="#8f8f8f"/><rect x="2" y="5" width="1" height="1" fill="#fff"/><rect x="3" y="5" width="8" height="1" fill="#8f8f8f"/><rect x="11" y="5" width="1" height="1" fill="#fff"/><rect x="12" y="5" width="2" height="1" fill="#8f8f8f"/><rect x="0" y="6" width="2" height="1" fill="#8f8f8f"/><rect x="2" y="6" width="1" height="1" fill="#fff"/><rect x="3" y="6" width="8" height="1" fill="#8f8f8f"/><rect x="11" y="6" width="1" height="1" fill="#fff"/><rect x="12" y="6" width="2" height="1" fill="#8f8f8f"/><rect x="0" y="7" width="2" height="1" fill="#8f8f8f"/><rect x="2" y="7" width="1" height="1" fill="#fff"/><rect x="3" y="7" width="8" height="1" fill="#8f8f8f"/><rect x="11" y="7" width="1" height="1" fill="#fff"/><rect x="12" y="7" width="2" height="1" fill="#8f8f8f"/><rect x="0" y="8" width="2" height="1" fill="#8f8f8f"/><rect x="2" y="8" width="3" height="1" fill="#fff"/><rect x="5" y="8" width="4" height="1" fill="#8f8f8f"/><rect x="9" y="8" width="3" height="1" fill="#fff"/><rect x="12" y="8" width="2" height="1" fill="#8f8f8f"/><rect x="0" y="9" width="14" height="1" fill="#8f8f8f"/><rect x="0" y="10" width="14" height="1" fill="#8f8f8f"/><rect x="0" y="11" width="14" height="1" fill="#8f8f8f"/></svg>
<svg style="position:absolute;left:8px;top:244px" width="14" height="12" viewBox="0 0 14 12" shape-rendering="crispEdges"><rect x="0" y="0" width="6" height="1" fill="#8f8f8f"/><rect x="0" y="1" width="7" height="1" fill="#8f8f8f"/><rect x="0" y="2" width="14" height="1" fill="#8f8f8f"/><rect x="0" y="3" width="14" height="1" fill="#8f8f8f"/><rect x="0" y="4" width="14" height="1" fill="#8f8f8f"/><rect x="0" y="5" width="14" height="1" fill="#8f8f8f"/><rect x="0" y="6" width="14" height="1" fill="#8f8f8f"/><rect x="0" y="7" width="14" height="1" fill="#8f8f8f"/><rect x="0" y="8" width="14" height="1" fill="#8f8f8f"/><rect x="0" y="9" width="14" height="1" fill="#8f8f8f"/><rect x="0" y="10" width="14" height="1" fill="#8f8f8f"/><rect x="0" y="11" width="14" height="1" fill="#8f8f8f"/></svg>
<svg style="position:absolute;left:8px;top:270px" width="14" height="12" viewBox="0 0 14 12" shape-rendering="crispEdges"><rect x="0" y="0" width="6" height="1" fill="#8f8f8f"/><rect x="0" y="1" width="7" height="1" fill="#8f8f8f"/><rect x="0" y="2" width="14" height="1" fill="#8f8f8f"/><rect x="0" y="3" width="14" height="1" fill="#8f8f8f"/><rect x="0" y="4" width="14" height="1" fill="#8f8f8f"/><rect x="0" y="5" width="14" height="1" fill="#8f8f8f"/><rect x="0" y="6" width="14" height="1" fill="#8f8f8f"/><rect x="0" y="7" width="14" height="1" fill="#8f8f8f"/><rect x="0" y="8" width="14" height="1" fill="#8f8f8f"/><rect x="0" y="9" width="14" height="1" fill="#8f8f8f"/><rect x="0" y="10" width="14" height="1" fill="#8f8f8f"/><rect x="0" y="11" width="14" height="1" fill="#8f8f8f"/></svg>
<svg style="position:absolute;left:8px;top:297px" width="14" height="12" viewBox="0 0 14 12" shape-rendering="crispEdges"><rect x="0" y="0" width="6" height="1" fill="#ff7c00"/><rect x="0" y="1" width="7" height="1" fill="#ff7c00"/><rect x="0" y="2" width="14" height="1" fill="#ff7c00"/><rect x="0" y="3" width="2" height="1" fill="#ff7c00"/><rect x="2" y="3" width="3" height="1" fill="#fff"/><rect x="5" y="3" width="9" height="1" fill="#ff7c00"/><rect x="0" y="4" width="1" height="1" fill="#ff7c00"/><rect x="1" y="4" width="5" height="1" fill="#fff"/><rect x="6" y="4" width="8" height="1" fill="#ff7c00"/><rect x="0" y="5" width="1" height="1" fill="#ff7c00"/><rect x="1" y="5" width="2" height="1" fill="#fff"/><rect x="3" y="5" width="1" height="1" fill="#ff7c00"/><rect x="4" y="5" width="9" height="1" fill="#fff"/><rect x="13" y="5" width="1" height="1" fill="#ff7c00"/><rect x="0" y="6" width="1" height="1" fill="#ff7c00"/><rect x="1" y="6" width="2" height="1" fill="#fff"/><rect x="3" y="6" width="1" height="1" fill="#ff7c00"/><rect x="4" y="6" width="9" height="1" fill="#fff"/><rect x="13" y="6" width="1" height="1" fill="#ff7c00"/><rect x="0" y="7" width="1" height="1" fill="#ff7c00"/><rect x="1" y="7" width="5" height="1" fill="#fff"/><rect x="6" y="7" width="2" height="1" fill="#ff7c00"/><rect x="8" y="7" width="1" height="1" fill="#fff"/><rect x="9" y="7" width="2" height="1" fill="#ff7c00"/><rect x="11" y="7" width="1" height="1" fill="#fff"/><rect x="12" y="7" width="2" height="1" fill="#ff7c00"/><rect x="0" y="8" width="2" height="1" fill="#ff7c00"/><rect x="2" y="8" width="3" height="1" fill="#fff"/><rect x="5" y="8" width="3" height="1" fill="#ff7c00"/><rect x="8" y="8" width="1" height="1" fill="#fff"/><rect x="9" y="8" width="2" height="1" fill="#ff7c00"/><rect x="11" y="8" width="1" height="1" fill="#fff"/><rect x="12" y="8" width="2" height="1" fill="#ff7c00"/><rect x="0" y="9" width="14" height="1" fill="#ff7c00"/><rect x="0" y="10" width="14" height="1" fill="#ff7c00"/><rect x="0" y="11" width="14" height="1" fill="#ff7c00"/></svg>
<svg style="position:absolute;left:6px;top:323px" width="17" height="13" viewBox="0 0 17 13"><path d="M4.2,6 L1.8,8.2 L4.2,10.4 M6.6,6 L9,8.2 L6.6,10.4" stroke="#707070" fill="none" stroke-width="1.4"/><path d="M7.2,1.5 H16 M11.6,1.5 V11.3 M9.8,11.3 H13.6" stroke="#707070" fill="none" stroke-width="1.2"/><path d="M7.2,1 V3 M16,1 V3" stroke="#707070" stroke-width="1"/></svg>
<svg style="position:absolute;left:95px;top:183px" width="17" height="14" viewBox="0 0 17 14"><circle cx="9" cy="3.5" r="2.7" fill="none" stroke="#0b89d3" stroke-width="1.5"/><rect x="5" y="3" width="1.3" height="1" fill="#0b89d3"/><rect x="11.7" y="3" width="1.3" height="1" fill="#0b89d3"/><path d="M2.7,12.3 V11.3 Q3.2,8.7 9,8.7 Q14.8,8.7 15.3,11.3 V12.3 Z" fill="none" stroke="#0b89d3" stroke-width="1.35" stroke-linejoin="round"/></svg>
<svg style="position:absolute;left:95px;top:206px" width="17" height="14" viewBox="0 0 17 14"><circle cx="9" cy="3.5" r="2.7" fill="none" stroke="#0b89d3" stroke-width="1.5"/><rect x="5" y="3" width="1.3" height="1" fill="#0b89d3"/><rect x="11.7" y="3" width="1.3" height="1" fill="#0b89d3"/><path d="M2.7,12.3 V11.3 Q3.2,8.7 9,8.7 Q14.8,8.7 15.3,11.3 V12.3 Z" fill="none" stroke="#0b89d3" stroke-width="1.35" stroke-linejoin="round"/></svg>
<svg style="position:absolute;left:95px;top:229px" width="17" height="14" viewBox="0 0 17 14"><circle cx="9" cy="3.5" r="2.7" fill="none" stroke="#0b89d3" stroke-width="1.5"/><rect x="5" y="3" width="1.3" height="1" fill="#0b89d3"/><rect x="11.7" y="3" width="1.3" height="1" fill="#0b89d3"/><path d="M2.7,12.3 V11.3 Q3.2,8.7 9,8.7 Q14.8,8.7 15.3,11.3 V12.3 Z" fill="none" stroke="#0b89d3" stroke-width="1.35" stroke-linejoin="round"/></svg>
<svg style="position:absolute;left:95px;top:252px" width="17" height="14" viewBox="0 0 17 14"><circle cx="9" cy="3.5" r="2.7" fill="none" stroke="#0b89d3" stroke-width="1.5"/><rect x="5" y="3" width="1.3" height="1" fill="#0b89d3"/><rect x="11.7" y="3" width="1.3" height="1" fill="#0b89d3"/><path d="M2.7,12.3 V11.3 Q3.2,8.7 9,8.7 Q14.8,8.7 15.3,11.3 V12.3 Z" fill="none" stroke="#0b89d3" stroke-width="1.35" stroke-linejoin="round"/></svg>
<svg style="position:absolute;left:1343px;top:893px" width="15" height="15" viewBox="0 0 15 15"><circle cx="5.5" cy="5" r="4" fill="#fff" stroke="#0c8ad5" stroke-width="1.6"/><path d="M8.3,8 L12.6,12.3" stroke="#0c8ad5" stroke-width="2.4" stroke-linecap="round"/></svg>
<svg style="position:absolute;left:1371px;top:893px" width="14" height="14" viewBox="0 0 14 14" shape-rendering="crispEdges"><rect x="0" y="0" width="13" height="1" fill="#0ea52b"/><rect x="0" y="1" width="1" height="1" fill="#0ea52b"/><rect x="1" y="1" width="1" height="1" fill="#8fe39c"/><rect x="2" y="1" width="1" height="1" fill="#0ea52b"/><rect x="3" y="1" width="8" height="1" fill="#fff"/><rect x="11" y="1" width="1" height="1" fill="#0ea52b"/><rect x="12" y="1" width="1" height="1" fill="#8fe39c"/><rect x="13" y="1" width="1" height="1" fill="#0ea52b"/><rect x="0" y="2" width="1" height="1" fill="#0ea52b"/><rect x="1" y="2" width="1" height="1" fill="#8fe39c"/><rect x="2" y="2" width="1" height="1" fill="#0ea52b"/><rect x="3" y="2" width="6" height="1" fill="#fff"/><rect x="9" y="2" width="1" height="1" fill="#0ea52b"/><rect x="10" y="2" width="1" height="1" fill="#fff"/><rect x="11" y="2" width="1" height="1" fill="#0ea52b"/><rect x="12" y="2" width="1" height="1" fill="#8fe39c"/><rect x="13" y="2" width="1" height="1" fill="#0ea52b"/><rect x="0" y="3" width="1" height="1" fill="#0ea52b"/><rect x="1" y="3" width="1" height="1" fill="#8fe39c"/><rect x="2" y="3" width="1" height="1" fill="#0ea52b"/><rect x="3" y="3" width="6" height="1" fill="#fff"/><rect x="9" y="3" width="1" height="1" fill="#0ea52b"/><rect x="10" y="3" width="1" height="1" fill="#fff"/><rect x="11" y="3" width="1" height="1" fill="#0ea52b"/><rect x="12" y="3" width="1" height="1" fill="#8fe39c"/><rect x="13" y="3" width="1" height="1" fill="#0ea52b"/><rect x="0" y="4" width="1" height="1" fill="#0ea52b"/><rect x="1" y="4" width="1" height="1" fill="#8fe39c"/><rect x="2" y="4" width="1" height="1" fill="#0ea52b"/><rect x="3" y="4" width="8" height="1" fill="#fff"/><rect x="11" y="4" width="1" height="1" fill="#0ea52b"/><rect x="12" y="4" width="1" height="1" fill="#8fe39c"/><rect x="13" y="4" width="1" height="1" fill="#0ea52b"/><rect x="0" y="5" width="1" height="1" fill="#0ea52b"/><rect x="1" y="5" width="1" height="1" fill="#8fe39c"/><rect x="2" y="5" width="10" height="1" fill="#0ea52b"/><rect x="12" y="5" width="1" height="1" fill="#8fe39c"/><rect x="13" y="5" width="1" height="1" fill="#0ea52b"/><rect x="0" y="6" width="1" height="1" fill="#0ea52b"/><rect x="1" y="6" width="13" height="1" fill="#8fe39c"/><rect x="0" y="7" width="1" height="1" fill="#0ea52b"/><rect x="1" y="7" width="12" height="1" fill="#82df90"/><rect x="13" y="7" width="1" height="1" fill="#0ea52b"/><rect x="0" y="8" width="1" height="1" fill="#0ea52b"/><rect x="1" y="8" width="12" height="1" fill="#82df90"/><rect x="13" y="8" width="1" height="1" fill="#0ea52b"/><rect x="0" y="9" width="1" height="1" fill="#0ea52b"/><rect x="1" y="9" width="12" height="1" fill="#82df90"/><rect x="13" y="9" width="1" height="1" fill="#0ea52b"/><rect x="0" y="10" width="1" height="1" fill="#0ea52b"/><rect x="1" y="10" width="12" height="1" fill="#82df90"/><rect x="13" y="10" width="1" height="1" fill="#0ea52b"/><rect x="0" y="11" width="1" height="1" fill="#0ea52b"/><rect x="1" y="11" width="12" height="1" fill="#82df90"/><rect x="13" y="11" width="1" height="1" fill="#0ea52b"/><rect x="0" y="12" width="1" height="1" fill="#0ea52b"/><rect x="1" y="12" width="12" height="1" fill="#82df90"/><rect x="13" y="12" width="1" height="1" fill="#0ea52b"/><rect x="0" y="13" width="14" height="1" fill="#0ea52b"/></svg>
<svg style="position:absolute;left:1433px;top:893px" width="12" height="14" viewBox="0 0 12 14" shape-rendering="crispEdges"><rect x="0" y="0" width="9" height="1" fill="#1a8dd5"/><rect x="0" y="1" width="1" height="1" fill="#1a8dd5"/><rect x="1" y="1" width="6" height="1" fill="#fff"/><rect x="7" y="1" width="3" height="1" fill="#1a8dd5"/><rect x="0" y="2" width="1" height="1" fill="#1a8dd5"/><rect x="1" y="2" width="6" height="1" fill="#fff"/><rect x="7" y="2" width="4" height="1" fill="#1a8dd5"/><rect x="0" y="3" width="1" height="1" fill="#1a8dd5"/><rect x="1" y="3" width="6" height="1" fill="#fff"/><rect x="7" y="3" width="5" height="1" fill="#1a8dd5"/><rect x="0" y="4" width="1" height="1" fill="#1a8dd5"/><rect x="1" y="4" width="10" height="1" fill="#fff"/><rect x="11" y="4" width="1" height="1" fill="#1a8dd5"/><rect x="0" y="5" width="1" height="1" fill="#1a8dd5"/><rect x="1" y="5" width="10" height="1" fill="#fff"/><rect x="11" y="5" width="1" height="1" fill="#1a8dd5"/><rect x="0" y="6" width="1" height="1" fill="#1a8dd5"/><rect x="1" y="6" width="1" height="1" fill="#fff"/><rect x="2" y="6" width="1" height="1" fill="#1a8dd5"/><rect x="3" y="6" width="1" height="1" fill="#fff"/><rect x="4" y="6" width="5" height="1" fill="#1a8dd5"/><rect x="9" y="6" width="2" height="1" fill="#fff"/><rect x="11" y="6" width="1" height="1" fill="#1a8dd5"/><rect x="0" y="7" width="1" height="1" fill="#1a8dd5"/><rect x="1" y="7" width="10" height="1" fill="#fff"/><rect x="11" y="7" width="1" height="1" fill="#1a8dd5"/><rect x="0" y="8" width="1" height="1" fill="#1a8dd5"/><rect x="1" y="8" width="1" height="1" fill="#fff"/><rect x="2" y="8" width="1" height="1" fill="#1a8dd5"/><rect x="3" y="8" width="1" height="1" fill="#fff"/><rect x="4" y="8" width="4" height="1" fill="#1a8dd5"/><rect x="8" y="8" width="3" height="1" fill="#fff"/><rect x="11" y="8" width="1" height="1" fill="#1a8dd5"/><rect x="0" y="9" width="1" height="1" fill="#1a8dd5"/><rect x="1" y="9" width="8" height="1" fill="#fff"/><rect x="0" y="10" width="1" height="1" fill="#1a8dd5"/><rect x="1" y="10" width="1" height="1" fill="#fff"/><rect x="2" y="10" width="1" height="1" fill="#1a8dd5"/><rect x="3" y="10" width="1" height="1" fill="#fff"/><rect x="4" y="10" width="3" height="1" fill="#1a8dd5"/><rect x="7" y="10" width="1" height="1" fill="#fff"/><rect x="0" y="11" width="1" height="1" fill="#1a8dd5"/><rect x="1" y="11" width="6" height="1" fill="#fff"/><rect x="0" y="12" width="7" height="1" fill="#1a8dd5"/></svg>
<svg style="position:absolute;left:1441px;top:902px" width="7" height="7" viewBox="0 0 7 7"><path d="M1.2,1.2 L5.8,5.8 M5.8,1.2 L1.2,5.8" stroke="#f5301e" stroke-width="1.8"/></svg>
<div id="t0" style="left:25px;top:9px;font-size:16px;line-height:16px;font-weight:normal;color:#000;white-space:pre;letter-spacing:0.500px;-webkit-text-stroke:0.2px currentColor;">*projects</div>
<div id="t1" style="left:27px;top:43px;font-size:15px;line-height:15px;font-weight:normal;color:#000;white-space:pre;-webkit-text-stroke:0.2px currentColor;">属性</div>
<div id="t2" style="left:85px;top:43px;font-size:15px;line-height:15px;font-weight:normal;color:#000;white-space:pre;-webkit-text-stroke:0.2px currentColor;">数据</div>
<div id="t3" style="left:143px;top:43px;font-size:16px;line-height:16px;font-weight:normal;color:#000;white-space:pre;-webkit-text-stroke:0.2px currentColor;transform:scaleX(0.88);transform-origin:0 0;">ER</div>
<div id="t4" style="left:165px;top:43px;font-size:15px;line-height:15px;font-weight:normal;color:#000;white-space:pre;-webkit-text-stroke:0.2px currentColor;">图</div>
<div id="t5" style="left:719px;top:43px;font-size:16px;line-height:16px;font-weight:normal;color:#000;white-space:pre;letter-spacing:0.111px;-webkit-text-stroke:0.2px currentColor;">KaiwuDB - defaultdb</div>
<div id="t6" style="left:901px;top:43px;font-size:15px;line-height:15px;font-weight:normal;color:#000;white-space:pre;-webkit-text-stroke:0.2px currentColor;">关系数据库</div>
<div id="t7" style="left:1028px;top:43px;font-size:16px;line-height:16px;font-weight:normal;color:#000;white-space:pre;-webkit-text-stroke:0.2px currentColor;">company_a_db</div>
<div id="t8" style="left:1172px;top:43px;font-size:15px;line-height:15px;font-weight:normal;color:#000;white-space:pre;-webkit-text-stroke:0.2px currentColor;">模式</div>
<div id="t9" style="left:1255px;top:43px;font-size:16px;line-height:16px;font-weight:normal;color:#000;white-space:pre;letter-spacing:0.333px;-webkit-text-stroke:0.2px currentColor;">company</div>
<div id="t10" style="left:1356px;top:43px;font-size:15px;line-height:15px;font-weight:normal;color:#000;white-space:pre;-webkit-text-stroke:0.2px currentColor;">表</div>
<div id="t11" style="left:1423px;top:43px;font-size:16px;line-height:16px;font-weight:normal;color:#a4a4a4;white-space:pre;letter-spacing:0.571px;-webkit-text-stroke:0.2px currentColor;">projects</div>
<div id="t12" style="left:15px;top:86px;font-size:15px;line-height:15px;font-weight:normal;color:#000;white-space:pre;-webkit-text-stroke:0.2px currentColor;">表名:</div>
<div id="t13" style="left:15px;top:114px;font-size:15px;line-height:15px;font-weight:normal;color:#000;white-space:pre;-webkit-text-stroke:0.2px currentColor;">描述:</div>
<div id="t14" style="left:63px;top:86px;font-size:16px;line-height:16px;font-weight:normal;color:#000;white-space:pre;letter-spacing:0.571px;-webkit-text-stroke:0.2px currentColor;">projects</div>
<div id="t15" style="left:117px;top:182px;font-size:16px;line-height:16px;font-weight:bold;color:#000;white-space:pre;letter-spacing:0.333px;">root</div>
<div id="t16" style="left:117px;top:205px;font-size:16px;line-height:16px;font-weight:bold;color:#000;white-space:pre;letter-spacing:0.250px;">admin</div>
<div id="t17" style="left:117px;top:228px;font-size:16px;line-height:16px;font-weight:bold;color:#000;white-space:pre;letter-spacing:0.167px;">kaiwudb</div>
<div id="t18" style="left:117px;top:251px;font-size:16px;line-height:16px;font-weight:bold;color:#000;white-space:pre;letter-spacing:-0.333px;">test</div>
<div id="t19" style="left:27px;top:195px;font-size:15px;line-height:15px;font-weight:normal;color:#000;white-space:pre;-webkit-text-stroke:0.2px currentColor;">字段</div>
<div id="t20" style="left:27px;top:221px;font-size:15px;line-height:15px;font-weight:normal;color:#000;white-space:pre;-webkit-text-stroke:0.2px currentColor;">约束</div>
<div id="t21" style="left:27px;top:247px;font-size:15px;line-height:15px;font-weight:normal;color:#000;white-space:pre;-webkit-text-stroke:0.2px currentColor;">外键</div>
<div id="t22" style="left:27px;top:273px;font-size:15px;line-height:15px;font-weight:normal;color:#000;white-space:pre;-webkit-text-stroke:0.2px currentColor;">索引</div>
<div id="t23" style="left:27px;top:298px;font-size:15px;line-height:15px;font-weight:bold;color:#000;white-space:pre;">权限</div>
<div id="t24" style="left:27px;top:325px;font-size:15px;line-height:15px;font-weight:normal;color:#000;white-space:pre;-webkit-text-stroke:0.2px currentColor;">DDL</div>
<div id="t25" style="left:798px;top:190px;font-size:15px;line-height:15px;font-weight:normal;color:#000;white-space:pre;-webkit-text-stroke:0.2px currentColor;">权限</div>
<div id="t26" style="left:959px;top:190px;font-size:15px;line-height:15px;font-weight:normal;color:#000;white-space:pre;-webkit-text-stroke:0.2px currentColor;">可授权</div>
<div id="t27" style="left:825px;top:215px;font-size:15.5px;line-height:15.5px;font-weight:normal;color:#000;white-space:pre;letter-spacing:-0.300px;-webkit-text-stroke:0.2px currentColor;">ALL</div>
<div id="t28" style="left:825px;top:240px;font-size:15.5px;line-height:15.5px;font-weight:normal;color:#000;white-space:pre;letter-spacing:-0.890px;-webkit-text-stroke:0.2px currentColor;">CREATE</div>
<div id="t29" style="left:825px;top:265px;font-size:15.5px;line-height:15.5px;font-weight:normal;color:#000;white-space:pre;letter-spacing:-0.483px;-webkit-text-stroke:0.2px currentColor;">DROP</div>
<div id="t30" style="left:825px;top:290px;font-size:15.5px;line-height:15.5px;font-weight:normal;color:#000;white-space:pre;letter-spacing:-0.188px;-webkit-text-stroke:0.2px currentColor;">GRANT</div>
<div id="t31" style="left:825px;top:315px;font-size:15.5px;line-height:15.5px;font-weight:normal;color:#000;white-space:pre;letter-spacing:-1.300px;-webkit-text-stroke:0.2px currentColor;">SELECT</div>
<div id="t32" style="left:825px;top:340px;font-size:15.5px;line-height:15.5px;font-weight:normal;color:#000;white-space:pre;letter-spacing:-0.780px;-webkit-text-stroke:0.2px currentColor;">INSERT</div>
<div id="t33" style="left:825px;top:365px;font-size:15.5px;line-height:15.5px;font-weight:normal;color:#000;white-space:pre;letter-spacing:-1.300px;-webkit-text-stroke:0.2px currentColor;">DELETE</div>
<div id="t34" style="left:825px;top:390px;font-size:15.5px;line-height:15.5px;font-weight:normal;color:#000;white-space:pre;letter-spacing:-0.200px;-webkit-text-stroke:0.2px currentColor;">UPDATE</div>
<div id="t35" style="left:825px;top:415px;font-size:15.5px;line-height:15.5px;font-weight:normal;color:#000;white-space:pre;letter-spacing:-0.511px;-webkit-text-stroke:0.2px currentColor;">ZONECONFIG</div>
<div id="t36" style="left:801px;top:472px;font-size:15px;line-height:15px;font-weight:normal;color:#000;white-space:pre;-webkit-text-stroke:0.2px currentColor;">全选</div>
<div id="t37" style="left:846px;top:472px;font-size:15px;line-height:15px;font-weight:normal;color:#000;white-space:pre;-webkit-text-stroke:0.2px currentColor;">全不选</div>
<div id="t38" style="left:795px;top:505px;font-size:16px;line-height:16px;font-weight:normal;color:#000;white-space:pre;letter-spacing:0.333px;-webkit-text-stroke:0.2px currentColor;">test</div>
<div id="t39" style="left:1390px;top:893px;font-size:15px;line-height:15px;font-weight:normal;color:#000;white-space:pre;-webkit-text-stroke:0.2px currentColor;">保存</div>
<div id="t40" style="left:1451px;top:893px;font-size:15px;line-height:15px;font-weight:normal;color:#000;white-space:pre;-webkit-text-stroke:0.2px currentColor;">还原</div>
</body></html>
